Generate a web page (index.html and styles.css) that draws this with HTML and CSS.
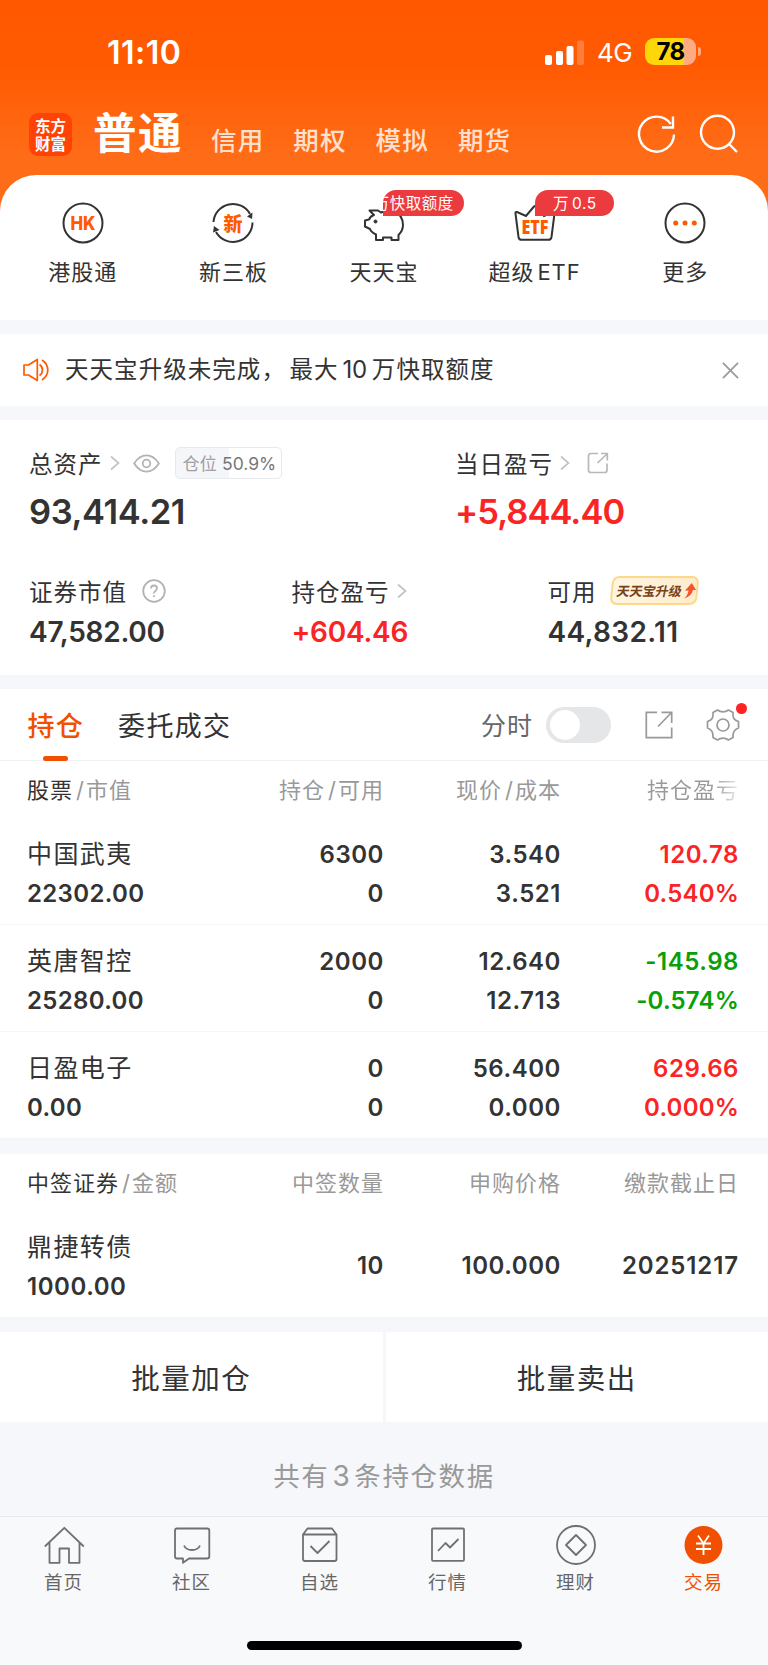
FILE: index.html
```html
<!DOCTYPE html>
<html lang="zh-CN">
<head>
<meta charset="utf-8">
<title>交易</title>
<link rel="stylesheet" href="styles.css">
</head>
<body>
<div class="app">
  <header class="header">
    <div class="status">
      <span class="time">11:10</span>
      <svg class="signal" width="40" height="26" viewBox="0 0 40 26" fill="#fff"><rect x="0" y="15" width="7" height="10" rx="2"/><rect x="11" y="11" width="7" height="14" rx="2"/><rect x="21.500" y="6" width="7" height="19" rx="2"/><rect x="32" y="0.500" width="7" height="24.500" rx="2" opacity=".22"/></svg>
      <span class="net">4G</span>
      <span class="battery">78</span>
      <span class="battery-tip"></span>
    </div>
    <div class="topnav">
      <div class="logo"><span>东方</span><span>财富</span></div>
      <span class="top-active">普通</span>
      <span class="top-item">信用</span>
      <span class="top-item">期权</span>
      <span class="top-item">模拟</span>
      <span class="top-item">期货</span>
      <svg class="refresh" width="40" height="40" viewBox="0 0 40 40" fill="none" stroke="#fff" stroke-width="2.400"><path d="M37 20.500A17.500 17.500 0 1 1 33.800 10"/><path d="M36 2.500v11H25"/></svg>
      <svg class="search" width="40" height="40" viewBox="0 0 40 40" fill="none" stroke="#fff" stroke-width="2.400"><circle cx="18.500" cy="18.300" r="16.500"/><path d="M29.500 29.500 38 38"/></svg>
    </div>
  </header>

  <section class="quick-wrap">
    <div class="quick">
      <div class="quick-item">
        <svg width="44" height="44" viewBox="0 0 44 44"><circle cx="22" cy="22" r="19.500" fill="none" stroke="#333" stroke-width="2"/><text class="ico-hk" x="22" y="29" text-anchor="middle" textLength="25" lengthAdjust="spacingAndGlyphs">HK</text></svg>
        <span>港股通</span>
      </div>
      <div class="quick-item">
        <svg width="44" height="44" viewBox="0 0 44 44"><path d="M2.500 21A19.500 19.500 0 0 1 39 13M41.500 21.500A19.500 19.500 0 0 1 5 31" fill="none" stroke="#333" stroke-width="2"/><path d="M36 15.500 41.500 11.500 41 18Z M2 31.500 3 25 8.500 29Z" fill="#333"/><text class="ico-xin" x="22" y="29.500" text-anchor="middle">新</text></svg>
        <span>新三板</span>
      </div>
      <div class="quick-item">
        <svg width="44" height="44" viewBox="0 0 44 44" fill="none" stroke="#333" stroke-width="2" stroke-linejoin="round"><path d="M12 14 7.500 9.500H16L19 11.500Q25 8.500 32 10.500Q41 14 41 24Q41 29.500 36.500 34V39H29.500V36.500H21V39H14V33.500Q9 31 8 28L3 25.500V19.500L7 18.500Q8.500 15 12 14Z"/><circle cx="13.500" cy="20.500" r="1.500" fill="#333" stroke-width="1"/></svg>
        <em class="badge badge-clip"><b>万快取额度</b></em>
        <span>天天宝</span>
      </div>
      <div class="quick-item">
        <svg width="44" height="44" viewBox="0 0 44 44"><path d="M2.500 12.500Q2 10.500 4 11L13 15 21 5.500Q22 4.500 23 5.500L31 15 40 11Q42 10.500 41.500 12.500L38.500 36Q38 38.800 35.500 38.800H8.500Q6 38.800 5.500 36Z" fill="none" stroke="#333" stroke-width="2"/><text class="ico-etf" x="22" y="32.500" text-anchor="middle" textLength="27" lengthAdjust="spacingAndGlyphs">ETF</text></svg>
        <em class="badge">万<i>0.5</i></em>
        <span>超级<i class="etf">ETF</i></span>
      </div>
      <div class="quick-item">
        <svg width="44" height="44" viewBox="0 0 44 44"><circle cx="22" cy="22" r="19.500" fill="none" stroke="#333" stroke-width="2"/><g fill="#ff5a00"><circle cx="12.700" cy="22" r="2.500"/><circle cx="22" cy="22" r="2.500"/><circle cx="31.300" cy="22" r="2.500"/></g></svg>
        <span>更多</span>
      </div>
    </div>
  </section>

  <section class="notice">
    <svg width="26" height="24" viewBox="0 0 26 24" fill="none" stroke="#ff5a00" stroke-width="1.700" stroke-linejoin="round"><path d="M1 7H5.500L14.300 1.500V22.500L5.500 17H1Z"/><path d="M16.500 6.500Q19.500 8.500 19.500 12T16.500 17.500M19 2Q24.800 6 24.800 12T19 22"/></svg>
    <span class="notice-text">天天宝升级未完成<span class="comma">，</span>最大<i>10</i>万快取额度</span>
    <svg class="close" width="17" height="17" viewBox="0 0 18 18" stroke="#999" stroke-width="1.800"><path d="M1 1 17 17M17 1 1 17"/></svg>
  </section>

  <section class="assets">
    <div class="asset-row top">
      <div class="asset">
        <div class="label">总资产<svg class="chev" width="10" height="16" viewBox="0 0 10 16"><path d="M1 1.500 8.500 8 1 14.500"/></svg>
          <svg class="eye" width="27" height="19" viewBox="0 0 28 20" fill="none" stroke="#b3b3b3" stroke-width="1.900"><path d="M1 10Q6.500 1.500 14 1.500T27 10Q21.500 18.500 14 18.500T1 10Z"/><circle cx="14" cy="10" r="4"/></svg>
          <span class="ratio">仓位<b>50.9%</b></span></div>
        <div class="big">93,414.21</div>
      </div>
      <div class="asset">
        <div class="label">当日盈亏<svg class="chev" width="10" height="16" viewBox="0 0 10 16"><path d="M1 1.500 8.500 8 1 14.500"/></svg>
          <svg class="share-s" width="22" height="22" viewBox="0 0 22 22" fill="none" stroke="#b8b8b8" stroke-width="1.700"><path d="M11 1.500H4Q1.500 1.500 1.500 4V18Q1.500 20.500 4 20.500H17.500Q20 20.500 20 18V11.500M10.500 11 20 2M14 1.500H20.300V8.500"/></svg></div>
        <div class="big profit">+5,844.40</div>
      </div>
    </div>
    <div class="asset-row bottom">
      <div class="asset">
        <div class="label">证券市值<svg class="help" width="24" height="24" viewBox="0 0 24 24" fill="none" stroke="#b3b3b3" stroke-width="1.800"><circle cx="12" cy="12" r="10.800"/><path d="M9 9.500Q9 6.500 12 6.500T15 9.300Q15 10.800 13.300 12T12 14.500M12 16.200V18"/></svg></div>
        <div class="mid">47,582.00</div>
      </div>
      <div class="asset">
        <div class="label">持仓盈亏<svg class="chev" width="10" height="16" viewBox="0 0 10 16"><path d="M1 1.500 8.500 8 1 14.500"/></svg></div>
        <div class="mid red">+604.46</div>
      </div>
      <div class="asset">
        <div class="label">可用<span class="upgrade"><b>天天宝升级</b><svg width="12" height="16" viewBox="0 0 12 16"><path d="M7 0 12 7H8.800Q8.500 13 1 15.500 4.500 12 4.500 7.500L1 7.800Z" fill="#f4532d"/></svg></span></div>
        <div class="mid usable">44,832.11</div>
      </div>
    </div>
  </section>

  <section class="holdings">
    <div class="tabs">
      <span class="tab active">持仓</span>
      <span class="tab">委托成交</span>
      <span class="minute">分时</span>
      <span class="toggle"></span>
      <svg class="share-l" width="28" height="28" viewBox="0 0 28 28" fill="none" stroke="#999" stroke-width="1.700"><path d="M12 1.300H1.300V26.700H26.700V16.500M13 15.500 26.500 1.500M16.500 1.300H26.700V12"/></svg>
      <span class="gear">
        <svg width="34" height="34" viewBox="0 0 34 34" fill="none" stroke="#999" stroke-width="1.700" stroke-linejoin="round"><path d="M11.500 2Q14 3.800 17 3.800T22.500 2L27 4.500C26.500 10 28 12 32.500 13.500V20C28 21.500 26.500 24 27 29.500L22.500 32Q20 30.200 17 30.200T11.500 32L7 29.500C7.500 24 6 21.500 1.500 20V13.500C6 12 7.500 10 7 4.500Z"/><circle cx="17" cy="17" r="6"/></svg>
        <i></i>
      </span>
    </div>
    <div class="grid head"><span><b>股票</b><i>/</i>市值</span><span>持仓<i>/</i>可用</span><span>现价<i>/</i>成本</span><span class="fade">持仓盈亏</span></div>
    <div class="grid row"><div><p class="name">中国武夷</p><p class="worth">22302.00</p></div><div><p>6300</p><p>0</p></div><div><p>3.540</p><p>3.521</p></div><div class="red"><p>120.78</p><p class="pct">0.540%</p></div></div>
    <div class="grid row"><div><p class="name">英唐智控</p><p class="worth">25280.00</p></div><div><p>2000</p><p>0</p></div><div><p>12.640</p><p>12.713</p></div><div class="green"><p>-145.98</p><p class="pct">-0.574%</p></div></div>
    <div class="grid row"><div><p class="name">日盈电子</p><p class="worth">0.00</p></div><div><p>0</p><p>0</p></div><div><p>56.400</p><p>0.000</p></div><div class="red"><p>629.66</p><p class="pct">0.000%</p></div></div>
  </section>

  <section class="lots">
    <div class="grid head"><span><b>中签证券</b><i>/</i>金额</span><span>中签数量</span><span>申购价格</span><span>缴款截止日</span></div>
    <div class="grid row"><div><p class="name">鼎捷转债</p><p>1000.00</p></div><div><p>10</p></div><div><p>100.000</p></div><div><p class="date">20251217</p></div></div>
  </section>

  <section class="actions"><span>批量加仓</span><span>批量卖出</span></section>
  <p class="summary">共有<i>3</i>条持仓数据</p>

  <nav class="tabbar">
    <div class="nav-item"><svg width="40" height="40" viewBox="0 0 40 40"><path d="M.8 20.500 20.300 1.800 39.800 20.500M5.500 16.500V36.800H15.500V22.500H25V36.800H35.500V16.500"/></svg><span>首页</span></div>
    <div class="nav-item"><svg width="40" height="40" viewBox="0 0 40 40"><path d="M5 2.500H35Q37.300 2.500 37.300 4.500V30.500Q37.300 32.500 35 32.500H17L11 36.800V32.500H5Q3 32.500 3 30.500V4.500Q3 2.500 5 2.500ZM12 19.500Q14 24 20 24T28 19.500"/></svg><span>社区</span></div>
    <div class="nav-item"><svg width="40" height="40" viewBox="0 0 40 40"><path d="M3 8.500 7.500 2.500H32L36.500 8.500V33Q36.500 35 34.500 35H5Q3 35 3 33ZM3 8.500H36.500M10.500 20 17.500 27 29.500 15"/></svg><span>自选</span></div>
    <div class="nav-item"><svg width="40" height="40" viewBox="0 0 40 40"><rect x="4" y="2.500" width="32" height="32.300" rx="1"/><path d="M10 25 17.500 17 22 21.500 30.500 13"/></svg><span>行情</span></div>
    <div class="nav-item"><svg width="40" height="40" viewBox="0 0 40 40"><circle cx="20" cy="19" r="19"/><path d="M20 9 30 19 20 29 10 19Z"/></svg><span>理财</span></div>
    <div class="nav-item on"><svg width="40" height="40" viewBox="0 0 40 40"><circle class="disc" cx="19.500" cy="19" r="19"/><path class="yen" d="M14 9.500 19.500 17.500 25 9.500M12 17.500H27M12 23H27M19.500 17V29"/></svg><span>交易</span></div>
    <div class="home-bar"></div>
  </nav>
</div>
</body>
</html>
```
FILE: styles.css
```css
* { box-sizing: border-box; margin: 0; padding: 0; }
body { font-family: Inter, "Noto Sans CJK SC", sans-serif; color: #333; background: #f6f7fa; }
i, em { font-style: normal; }
svg { display: block; flex: none; overflow: visible; }
.app { width: 768px; height: 1665px; overflow: hidden; background: #f6f7fa; display: flex; flex-direction: column; }
.red { color: #fa2425; }
.green { color: #08a008; }

.header { height: 175px; flex: none; background: linear-gradient(#ff5800 0, #ff5a02 65px, #ff6c17 155px, #ff6c17); }
.status { height: 98px; padding: 7px 67px 0 107px; display: flex; align-items: center; color: #fff; }
.time { font-size: 32px; font-weight: 600; line-height: 40px; letter-spacing: .5px; margin-right: auto; }
.signal { margin-right: 12px; }
.net { font-size: 26px; line-height: 40px; width: 48px; letter-spacing: -.5px; }
.battery { width: 51px; height: 27px; border-radius: 9px; background: linear-gradient(90deg, #ffd60a 39px, #ffab82 39px); color: #000; font-size: 24px; font-weight: 700; line-height: 27px; text-align: center; letter-spacing: -.6px; margin-top: -2px; }
.battery-tip { width: 3px; height: 9px; margin: -2px 0 0 2px; border-radius: 0 4px 4px 0; background: #ffa77d; }
.topnav { height: 77px; padding: 0 29px 0 29px; display: flex; align-items: center; color: #fff; }
.logo { width: 43px; height: 43px; border-radius: 9px; background: #ff4206; margin: -5px 21px 0 0; display: flex; flex-direction: column; align-items: center; padding-top: 3px; font: 700 15.500px/18px "Noto Sans CJK SC", sans-serif; }
.top-active { width: 118px; font-size: 43.500px; font-weight: 700; line-height: 60px; letter-spacing: 1.500px; margin-top: -7px; }
.top-item { width: 82.300px; font-size: 25.500px; font-weight: 500; line-height: 40px; letter-spacing: 1.200px; color: #ffe0cf; margin-top: 9px; white-space: nowrap; }
.refresh { margin: -6px 22.500px 0 auto; }
.search { margin-top: -6px; }

.quick-wrap { height: 145px; flex: none; background: #ff6c17; }
.quick { height: 145px; background: #fff; border-radius: 36px 36px 0 0; padding: 26px 7.500px 0; display: grid; grid-template-columns: repeat(5, 1fr); }
.quick-item { position: relative; display: flex; flex-direction: column; align-items: center; }
.quick-item > span { font-size: 22px; line-height: 30px; letter-spacing: 1px; margin-top: 12px; }
.etf { margin-left: 3px; }
.ico-hk { font: 800 19px Inter, sans-serif; fill: #ff5a00; }
.ico-xin { font: 900 19px "Noto Sans CJK SC", sans-serif; fill: #ff5a00; }
.ico-etf { font: 800 18.500px "Open Sans", sans-serif; fill: #ff5a00; }
.badge { position: absolute; left: 76px; top: -11px; width: 79px; height: 26px; border-radius: 13px 13px 13px 0; background: #ec3b3e; color: #fff; font-size: 15.500px; line-height: 27px; letter-spacing: .5px; text-align: center; white-space: nowrap; overflow: hidden; }
.badge i { margin-left: 3px; }
.badge-clip { left: 74px; width: 81px; display: flex; justify-content: flex-end; padding-right: 10px; }
.badge-clip b { font-weight: 400; }

.notice { height: 72px; margin-top: 14px; flex: none; background: #fff; display: flex; align-items: center; padding: 0 29px 0 23px; }
.notice-text { font-size: 23.500px; line-height: 36px; letter-spacing: 1.050px; margin: -1px 0 0 16px; }
.notice-text i { margin: 0 5px 0 4px; font-size: 24px; letter-spacing: -.3px; }
.comma { display: inline-block; width: 28px; }
.close { margin-left: auto; }

.assets { height: 255px; margin-top: 14px; flex: none; background: #fff; padding: 24px 29px 0; }
.asset-row { display: grid; }
.top { grid-template-columns: 426px 1fr; height: 128px; }
.bottom { grid-template-columns: 262.500px 256px 1fr; }
.label { height: 38px; font-size: 23.500px; letter-spacing: 1px; display: flex; align-items: center; white-space: nowrap; }
.chev { margin-left: 7px; fill: none; stroke: #c4c4c4; stroke-width: 1.700; }
.eye { margin-left: 13px; }
.ratio { width: 107px; height: 32px; margin-left: 15px; border: 1px solid #e8e9ec; border-radius: 5px; background: linear-gradient(90deg, #f5f6fa 50.9%, #fff 50.9%); font-size: 17px; line-height: 32px; letter-spacing: .3px; color: #a0a0a0; padding-left: 7px; }
.ratio b { font-weight: 400; font-size: 17.500px; color: #777; margin-left: 5px; letter-spacing: 0; }
.share-s { margin-left: 17px; }
.big { font-size: 34.500px; font-weight: 600; line-height: 44px; margin-top: 8px; letter-spacing: -.4px; }
.profit { color: #fa2425; letter-spacing: -.95px; }
.help { margin-left: 15px; }
.mid { font-size: 28px; font-weight: 600; line-height: 36px; margin-top: 4px; letter-spacing: -.25px; }
.usable { letter-spacing: .35px; }
.upgrade { width: 87px; height: 29px; margin: -2px 0 0 14px; border: 2px solid #fcd88a; border-radius: 7px; background: linear-gradient(90deg, #fff6e3, #ffeccb); transform: skewX(-6deg); display: flex; align-items: center; padding-left: 4px; }
.upgrade b { font-size: 13px; letter-spacing: 0; font-weight: 700; color: #75421b; transform: skewX(-6deg); }
.upgrade svg { margin-left: 2px; }

.holdings { margin-top: 14px; flex: none; background: #fff; }
.tabs { height: 72px; border-bottom: 1px solid #f2f2f4; display: flex; align-items: center; padding: 0 28px 0 27.500px; }
.tab { position: relative; height: 72px; line-height: 75px; font-size: 27px; letter-spacing: 1.300px; margin-right: 34px; white-space: nowrap; }
.active { color: #f05000; font-weight: 500; }
.active::after { content: ""; position: absolute; left: 15.500px; bottom: 0; width: 25px; height: 5px; border-radius: 3px; background: #f05000; }
.minute { margin: -2px 0 0 auto; font-size: 25px; letter-spacing: 1px; color: #666; }
.toggle { width: 65px; height: 36px; margin-left: 13px; border-radius: 18px; background: #e5e6e8; padding: 3px 4px; }
.toggle::before { content: ""; display: block; width: 30px; height: 30px; border-radius: 50%; background: #fff; }
.share-l { margin-left: 34px; }
.gear { position: relative; margin-left: 33px; }
.gear i { position: absolute; left: 29.500px; top: -4.500px; width: 11px; height: 11px; border-radius: 50%; background: #fa2425; }

.grid { display: grid; grid-template-columns: 180px 177px 177px 178px; padding: 0 29px 0 27px; }
.grid > :not(:first-child) { text-align: right; }
.head { height: 57px; line-height: 58px; font-size: 22px; letter-spacing: 1px; color: #999; white-space: nowrap; }
.head b { font-weight: 400; color: #333; }
.head i { margin: 0 1px 0 3px; }
.fade { background: linear-gradient(90deg, #999 86%, #eee); -webkit-background-clip: text; background-clip: text; color: transparent; }
.row { height: 107px; padding-top: 17px; font-size: 24px; font-weight: 600; line-height: 39px; letter-spacing: .55px; border-bottom: 1px solid #f4f5f7; white-space: nowrap; }
.name { font-size: 25px; font-weight: 400; letter-spacing: 1.400px; }
.worth { letter-spacing: .35px; }
.pct { letter-spacing: .2px; }
.date { letter-spacing: .9px; }
.lots { margin-top: 15px; flex: none; background: #fff; }
.lots .row > :not(:first-child) { padding-top: 18px; }
.actions { display: grid; grid-template-columns: 1fr 1fr; gap: 3px; margin-top: 14px; flex: none; }
.actions span { height: 90px; line-height: 93px; text-align: center; background: #fff; font-size: 28.500px; letter-spacing: 1.500px; }
.summary { height: 94px; flex: none; padding-top: 34px; text-align: center; font-size: 26.500px; line-height: 40px; letter-spacing: 1.600px; color: #999; }
.summary i { margin: 0 3px; font-size: 28px; }
.tabbar { position: relative; flex: 1; border-top: 1px solid #e8e9eb; background: #f8f9fb; display: grid; grid-template-columns: repeat(6, 1fr); }
.nav-item { display: flex; flex-direction: column; align-items: center; padding-top: 9px; font-size: 18.500px; letter-spacing: 1px; line-height: 28px; color: #666; }
.nav-item svg { fill: none; stroke: #707070; stroke-width: 1.800; stroke-linejoin: round; margin-bottom: 2px; }
.nav-item span { margin-right: 1px; }
.on { color: #f05000; }
.nav-item .disc { fill: #f05000; stroke: none; }
.nav-item .yen { stroke: #fff; }
.home-bar { position: absolute; left: 247px; bottom: 15px; width: 275px; height: 9px; border-radius: 5px; background: #000; }
```
